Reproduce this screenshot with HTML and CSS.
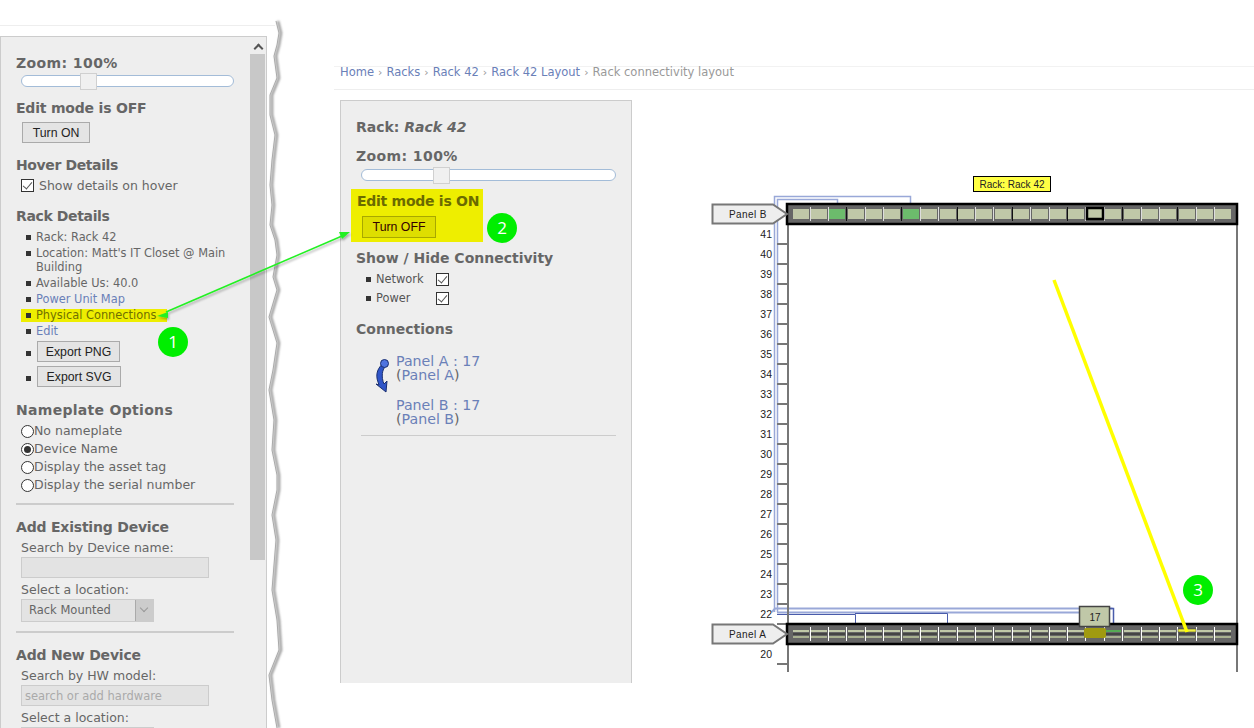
FILE: index.html
```html
<!DOCTYPE html>
<html lang="en">
<head>
  <meta charset="UTF-8">
  <title>Rack connectivity layout</title>
  <link rel="stylesheet" href="styles.css">
</head>
<body>
  <div class="left-col">
    <div class="sidebar">
      <div class="sidebar-body">
        <h3 class="h-zoom-a">Zoom: 100%</h3>
        <div class="slider"><span class="slider-handle handle-a"></span></div>

        <h3 class="h-edit">Edit mode is OFF</h3>
        <button class="btn btn-on">Turn ON</button>

        <h3 class="h-hover">Hover Details</h3>
        <label class="check-row"><input type="checkbox" checked> Show details on hover</label>

        <h3 class="h-rack">Rack Details</h3>
        <ul class="details">
          <li>Rack: Rack 42</li>
          <li>Location: Matt's IT Closet @ Main Building</li>
          <li>Available Us: 40.0</li>
          <li><a href="#">Power Unit Map</a></li>
          <li class="marked">Physical Connections</li>
          <li><a href="#">Edit</a></li>
          <li class="btn-item btn-item-first"><button class="btn btn-png">Export PNG</button></li>
          <li class="btn-item"><button class="btn btn-svg">Export SVG</button></li>
        </ul>

        <h3 class="h-name">Nameplate Options</h3>
        <div class="radios">
          <label><input type="radio" name="plate">No nameplate</label>
          <label><input type="radio" name="plate" checked>Device Name</label>
          <label><input type="radio" name="plate">Display the asset tag</label>
          <label><input type="radio" name="plate">Display the serial number</label>
        </div>
        <hr class="rule rule-a">

        <h3 class="h-add">Add Existing Device</h3>
        <div class="field">
          <label>Search by Device name:</label>
          <input class="text-input" type="text" disabled>
          <label>Select a location:</label>
          <div class="select-box"><span class="select-value">Rack Mounted</span><span class="select-arrow"></span></div>
        </div>
        <hr class="rule rule-b">

        <h3 class="h-add">Add New Device</h3>
        <div class="field">
          <label>Search by HW model:</label>
          <input class="text-input" type="text" placeholder="search or add hardware" disabled>
          <label>Select a location:</label>
          <div class="select-box"><span class="select-value"></span><span class="select-arrow"></span></div>
        </div>
      </div>
      <div class="scrollbar">
        <div class="scroll-up"></div>
        <div class="scroll-thumb"></div>
      </div>
    </div>
  </div>

  <div class="main">
    <div class="breadcrumb">
      <a href="#">Home</a> <i>›</i> <a href="#">Racks</a> <i>›</i> <a href="#">Rack 42</a> <i>›</i> <a href="#">Rack 42 Layout</a> <i>›</i> Rack connectivity layout
    </div>
    <div class="content">
      <div class="panel">
        <h3>Rack: <em>Rack 42</em></h3>
        <h3 class="h-zoom">Zoom: 100%</h3>
        <div class="slider slider-wide"><span class="slider-handle handle-b"></span></div>

        <div class="edit-on">
          <h3>Edit mode is ON</h3>
          <button class="btn btn-off">Turn OFF</button>
        </div>

        <h3 class="h-show">Show / Hide Connectivity</h3>
        <ul class="toggles">
          <li><span>Network</span><input type="checkbox" checked></li>
          <li><span>Power</span><input type="checkbox" checked></li>
        </ul>

        <h3 class="h-conn">Connections</h3>
        <div class="connections">
          <svg class="conn-arrow" width="14" height="34" viewBox="0 0 14 34">
            <path d="M9 4 C3 8 0 15 3 23 L4 26 L1 25 L11 33 L12 22 L9 25 C6 18 7 10 11 7 Z" fill="#2f55c8" stroke="#1a2f70" stroke-width="1"/>
            <circle cx="9.500" cy="4.500" r="4" fill="#4f74e0" stroke="#1a2f70" stroke-width="1"/>
          </svg>
          <div class="conn-links">
            <p><a href="#">Panel A : 17</a><br>(<a href="#">Panel A</a>)</p>
            <p><a href="#">Panel B : 17</a><br>(<a href="#">Panel B</a>)</p>
          </div>
        </div>
        <hr class="rule">
      </div>

      <svg class="rack" id="rack" width="554" height="510" viewBox="700 170 554 510">
        <g fill="none" stroke="#99a8d8" stroke-width="1.500">
          <path d="M774.500 612 V196.500 H910.500 V203"/>
          <path d="M777.500 612 V199.500 H837.500 V203"/>
        </g>
        <g fill="none" stroke="#99a8d8" stroke-width="2">
          <path d="M772 612 L775 608.500 H1112.500"/>
          <path d="M777 612.500 H1100"/>
        </g>
        <g fill="none" stroke="#4a5cab" stroke-width="1">
          <path d="M777 614.500 H855.500 V623"/>
          <path d="M855 613.500 H947.500 V623"/>
        </g>
        <path d="M1110 608.500 H1113.500 V623" fill="none" stroke="#4a5cab" stroke-width="1.500"/>
        <g id="ticks"></g>
        <path d="M788 224 V672 M1237 224 V672" stroke="#777" stroke-width="2" fill="none"/>

        <rect x="973.500" y="176.500" width="77" height="15" fill="#ffff44" stroke="#000"/>
        <text class="rack-text" x="1012" y="188" text-anchor="middle">Rack: Rack 42</text>

        <rect x="787" y="204" width="450" height="20" fill="#666" stroke="#000" stroke-width="2.500"/>
        <rect x="787" y="624" width="450" height="20" fill="#666" stroke="#000" stroke-width="2.500"/>
        <g id="ports-top"></g>
        <g id="ports-bottom"></g>

        <path d="M712.500 204.500 H773 L787 214 L773 223.500 H712.500 Z" fill="#eee" stroke="#777" stroke-width="2"/>
        <text class="rack-text rack-label" x="729" y="218">Panel B</text>
        <path d="M712.500 624.500 H773 L787 634 L773 643.500 H712.500 Z" fill="#eee" stroke="#777" stroke-width="2"/>
        <text class="rack-text rack-label" x="729" y="638">Panel A</text>

        <rect x="1084" y="628" width="22" height="10" rx="2" fill="#a09a10"/>
        <rect x="1079.500" y="606.500" width="30" height="20" fill="#c0c8a8" stroke="#444" stroke-width="1.500"/>
        <text class="rack-text" x="1095" y="621" text-anchor="middle">17</text>
      </svg>
    </div>
  </div>

  <svg class="torn" width="30" height="728" viewBox="260 0 30 728">
    <defs>
      <filter id="soft" x="-50%" y="-5%" width="200%" height="110%"><feGaussianBlur stdDeviation="1"/></filter>
    </defs>
    <path d="M278 21 L281 33 L279 45 L276 56 L279 78 L272 95 L272 115 L277 135 L274 160 L272 185 L274 205 L272 225 L277 240 L279 255 L275 277 L279 290 L271 317 L279 343 L275 370 L271 390 L276 420 L274 450 L279 475 L279 490 L274 515 L278 540 L274 590 L279 620 L281 650 L271 675 L274 700 L279 728" fill="none" stroke="#999" stroke-width="2.500" filter="url(#soft)"/>
    <path d="M276 21 L279 33 L277 45 L274 56 L277 78 L270 95 L270 115 L275 135 L272 160 L270 185 L272 205 L270 225 L275 240 L277 255 L273 277 L277 290 L269 317 L277 343 L273 370 L269 390 L274 420 L272 450 L277 475 L277 490 L272 515 L276 540 L272 590 L277 620 L279 650 L269 675 L272 700 L277 728" fill="none" stroke="#aaa" stroke-width="1"/>
  </svg>

  <svg class="notes" width="1254" height="728" viewBox="0 0 1254 728">
    <defs>
      <filter id="drop" x="-10%" y="-20%" width="120%" height="150%"><feDropShadow dx="1" dy="2" stdDeviation="1" flood-color="#000" flood-opacity=".3"/></filter>
    </defs>
    <g filter="url(#drop)" fill="#22f022" stroke="none">
      <path d="M166 312 L342 236" stroke="#22f022" stroke-width="1.500" fill="none"/>
      <path d="M350 232 L339 232 L342 239 Z"/>
      <path d="M157 316 L168 312 L168 318 Z"/>
    </g>
    <path d="M1054 280 L1187 632" stroke="#ffff00" stroke-width="3.500" fill="none"/>
    <circle cx="173" cy="342" r="15" fill="#00ee00"/>
    <circle cx="502" cy="228" r="15" fill="#00ee00"/>
    <circle cx="1198" cy="590" r="15" fill="#00ee00"/>
    <text class="note-num" x="173" y="348">1</text>
    <text class="note-num" x="502" y="234">2</text>
    <text class="note-num" x="1198" y="596">3</text>
  </svg>

  <script>
    // builds the repeating parts of the rack drawing
    var NS = "http://www.w3.org/2000/svg";
    function add(parent, name, attrs, text) {
      var el = document.createElementNS(NS, name);
      for (var k in attrs) el.setAttribute(k, attrs[k]);
      if (text) el.textContent = text;
      parent.appendChild(el);
      return el;
    }

    var ticks = document.getElementById("ticks");
    for (var n = 41; n >= 20; n--) {
      var y = 234 + (41 - n) * 20;
      if (n === 21) continue;
      add(ticks, "text", { "class": "rack-num", x: 772, y: y + 4, "text-anchor": "end" }, String(n));
      add(ticks, "rect", { x: 777, y: y + 9, width: 10, height: 2, fill: "#777" });
    }

    var portsTop = document.getElementById("ports-top");
    var portsBottom = document.getElementById("ports-bottom");
    var pitch = 18.39;
    for (var i = 0; i < 24; i++) {
      var x = Math.round(792.5 + i * pitch);
      var sepX = x + 17;
      var green = i === 2 || i === 6;
      if (i < 23) {
        add(portsTop, "rect", { x: sepX, y: 207, width: 1, height: 14, fill: i % 3 === 2 ? "#111" : "#ddd" });
        add(portsBottom, "rect", { x: sepX, y: 627, width: 1, height: 14, fill: "#fff" });
      }
      add(portsTop, "rect", { x: x, y: 209, width: 16, height: 10, fill: green ? "#6cbb6c" : "#c0c8a8" });
      add(portsBottom, "rect", { x: x, y: 630, width: 16, height: 2, fill: i === 17 ? "#55aa55" : "#c0c8a8" });
      add(portsBottom, "rect", { x: x, y: 636, width: 16, height: 2, fill: "#a8b090" });
      add(portsBottom, "rect", { x: x, y: 633, width: 16, height: 2, fill: "#444" });
    }
    add(portsTop, "rect", { x: 1087, y: 208, width: 16, height: 11, fill: "none", stroke: "#000", "stroke-width": 2.5 });
    add(portsBottom, "rect", { x: 1178, y: 629, width: 18, height: 3, fill: "#eeee44", stroke: "#333", "stroke-width": 0.5 });
  </script>
</body>
</html>
```

FILE: styles.css
```css
html, body {
  margin: 0;
  height: 728px;
  overflow: hidden;
  background: #fff;
}

body {
  position: relative;
  display: flex;
  font-family: "DejaVu Sans", Verdana, sans-serif;
  font-size: 12.5px;
  color: #666;
}

a {
  color: #6a80b8;
  text-decoration: none;
}

h3 {
  margin: 0;
  font-size: 14px;
  line-height: 18px;
  font-weight: bold;
  color: #666;
  white-space: nowrap;
}

.left-col {
  width: 275px;
  flex: none;
  box-sizing: border-box;
  margin-top: 25px;
  padding-top: 10px;
  border-top: 1px solid #eee;
}

.sidebar {
  width: 267px;
  height: 692px;
  box-sizing: border-box;
  display: flex;
  background: #eee;
  border: 1px solid #ccc;
  border-bottom: 0;
  overflow: hidden;
}

.sidebar-body {
  width: 249px;
  flex: none;
  box-sizing: border-box;
  padding: 17px 16px 0 15px;
}

.scrollbar {
  width: 15px;
  flex: none;
}

.scroll-up {
  height: 17px;
  position: relative;
}

.scroll-up::after {
  content: "";
  position: absolute;
  left: 5px;
  top: 8px;
  width: 5px;
  height: 5px;
  border-left: 2px solid #555;
  border-top: 2px solid #555;
  transform: rotate(45deg);
}

.scroll-thumb {
  height: 506px;
  background: #c8c8c8;
}

.slider {
  position: relative;
  width: 211px;
  height: 10px;
  margin: 3px 0 0 5px;
  background: #fff;
  border: 1px solid #a3bcd8;
  border-radius: 6px;
}

.slider-wide {
  width: 253px;
  margin: 4px 0 0 5px;
}

.slider-handle {
  position: absolute;
  top: -3px;
  width: 15px;
  height: 15px;
  background: #f0f0f0;
  border: 1px solid #d0d0d0;
}

.handle-a { left: 58px; }
.handle-b { left: 71px; }

.btn {
  display: block;
  padding: 0;
  height: 21px;
  box-sizing: border-box;
  background: #e4e4e4;
  border: 1px solid #aaa;
  font-family: "Liberation Sans", Arial, sans-serif;
  font-size: 12.3px;
  color: #222;
}

.h-zoom-a { letter-spacing: .4px; }

.h-edit {
  margin-top: 12px;
  letter-spacing: -.2px;
}

.btn-on {
  width: 68px;
  margin: 5px 0 0 6px;
}

.h-hover {
  margin-top: 13px;
  letter-spacing: -.38px;
}

.check-row {
  display: flex;
  align-items: center;
  gap: 5px;
  height: 16px;
  margin: 3px 0 0 5px;
}

input[type="checkbox"],
input[type="radio"] {
  appearance: none;
  position: relative;
  flex: none;
  width: 13px;
  height: 13px;
  margin: 0;
  background: #fff;
  border: 1px solid #333;
  box-sizing: border-box;
}

input[type="checkbox"]::after {
  content: "";
  position: absolute;
  left: 3px;
  top: 0;
  width: 4px;
  height: 8px;
  border-right: 1.5px solid #555;
  border-bottom: 1.5px solid #555;
  transform: rotate(40deg);
}

input[type="radio"] {
  border-radius: 50%;
  margin-top: 3px;
}

input[type="radio"]:checked::after {
  content: "";
  position: absolute;
  left: 2px;
  top: 2px;
  width: 7px;
  height: 7px;
  border-radius: 50%;
  background: #333;
}

.h-rack {
  margin-top: 14px;
  letter-spacing: -.37px;
}

.details {
  margin: 5px 0 0;
  padding: 0;
  list-style: none;
  font-size: 11.4px;
  line-height: 14px;
}

.details li {
  position: relative;
  padding: 0 0 2px 20px;
}

.details li::before,
.toggles li::before {
  content: "";
  position: absolute;
  left: 10px;
  top: 5px;
  width: 5px;
  height: 5px;
  background: #333;
}

.details .marked {
  width: 146px;
  height: 13px;
  box-sizing: border-box;
  margin: 1px 0 2px 5px;
  padding: 0 0 0 15px;
  line-height: 13px;
  background: #eeee00;
  color: #707000;
}

.details .marked::before {
  left: 5px;
  top: 4px;
}

.details .btn-item {
  height: 25px;
  box-sizing: border-box;
  padding-bottom: 0;
}

.details .btn-item::before {
  top: 10px;
}

.btn-item-first {
  margin-top: 1px;
}

.btn-item .btn {
  margin-left: 1px;
}

.btn-png { width: 83px; }
.btn-svg { width: 84px; }

.h-name {
  margin-top: 10px;
  letter-spacing: .3px;
}

.radios {
  margin: 2px 0 0 5px;
}

.radios label {
  display: flex;
  align-items: center;
  height: 18px;
}

.rule {
  height: 2px;
  margin: 0;
  border: 0;
  background: #ccc;
}

.rule-a { margin-top: 10px; }
.rule-b { margin-top: 9px; }

.h-add {
  margin-top: 13px;
  letter-spacing: -.2px;
}

.field {
  margin: 4px 0 0 5px;
  line-height: 16px;
}

.field label {
  display: block;
}

.text-input {
  display: block;
  width: 188px;
  height: 21px;
  box-sizing: border-box;
  margin: 1px 0 4px;
  padding: 0 3px;
  background: #e3e3e3;
  border: 1px solid #ccc;
  font-family: inherit;
  font-size: 11.5px;
}

.text-input::placeholder {
  color: #aaa;
}

.select-box {
  display: flex;
  width: 133px;
  height: 23px;
  box-sizing: border-box;
  margin-top: 1px;
  background: #e3e3e3;
  border: 1px solid #ccc;
  font-size: 11.5px;
  line-height: 21px;
}

.select-value {
  flex: 1;
  padding-left: 7px;
}

.select-arrow {
  position: relative;
  width: 17px;
  background: #ccc;
  border-left: 1px solid #aaa;
}

.select-arrow::after {
  content: "";
  position: absolute;
  left: 5px;
  top: 5px;
  width: 5px;
  height: 5px;
  border-right: 1px solid #999;
  border-bottom: 1px solid #999;
  transform: rotate(45deg);
}

.main {
  flex: 1;
  margin: 66px 0 0 59px;
}

.breadcrumb {
  height: 24px;
  box-sizing: border-box;
  padding: 0 0 0 6px;
  border-top: 1px solid #f2f2f2;
  border-bottom: 1px solid #eee;
  font-size: 11.5px;
  line-height: 11px;
  color: #999;
}

.breadcrumb i {
  font-style: normal;
  font-size: 11px;
  margin: 0 .4px;
}

.content {
  display: flex;
  align-items: flex-start;
}

.panel {
  width: 292px;
  height: 583px;
  flex: none;
  box-sizing: border-box;
  margin: 10px 0 0 6px;
  padding: 17px 15px 0;
  background: #eee;
  border: 1px solid #ccc;
  border-bottom: 0;
}

.h-zoom {
  margin-top: 11px;
  letter-spacing: .4px;
}

.edit-on {
  width: 132px;
  height: 53px;
  box-sizing: border-box;
  margin: 8px 0 0 -5px;
  padding: 3px 0 0 6px;
  background: #eeee00;
}

.edit-on h3 {
  color: #6b6b00;
  letter-spacing: -.27px;
}

.btn-off {
  width: 74px;
  height: 22px;
  margin: 6px 0 0 5px;
  background: #dede00;
  border-color: #a8a800;
  color: #300;
}

.h-show { margin-top: 7px; }

.toggles {
  margin: 5px 0 0;
  padding: 0;
  list-style: none;
  font-size: 11.4px;
}

.toggles li {
  position: relative;
  height: 19px;
  padding-left: 20px;
}

.toggles li::before {
  left: 10px;
}

.toggles li span {
  display: inline-block;
  width: 60px;
  color: #555;
}

.toggles input {
  vertical-align: middle;
}

.h-conn { margin-top: 10px; }

.connections {
  display: flex;
  margin: 16px 0 0 19px;
}

.conn-arrow {
  flex: none;
  margin: 5px 7px 0 0;
}

.conn-links {
  font-size: 14.2px;
  line-height: 14px;
}

.conn-links p {
  margin: 0 0 16px;
}

.conn-links p:last-child {
  margin-bottom: 9px;
}

.panel > .rule {
  margin: 0 0 0 5px;
  height: 1px;
  width: 255px;
}

.rack {
  flex: none;
  margin: 80px 0 0 68px;
}

.rack-text {
  font-family: "Liberation Sans", Arial, sans-serif;
  font-size: 10px;
  fill: #222;
}

.rack-label {
  letter-spacing: .4px;
}

.rack-num {
  font-family: "Liberation Sans", Arial, sans-serif;
  font-size: 10.5px;
  fill: #222;
}

.torn,
.notes {
  position: absolute;
  top: 0;
  pointer-events: none;
}

.torn { left: 260px; }
.notes { left: 0; }

.note-num {
  font-family: "Open Sans", sans-serif;
  font-size: 17px;
  fill: #fff;
  text-anchor: middle;
}
```
